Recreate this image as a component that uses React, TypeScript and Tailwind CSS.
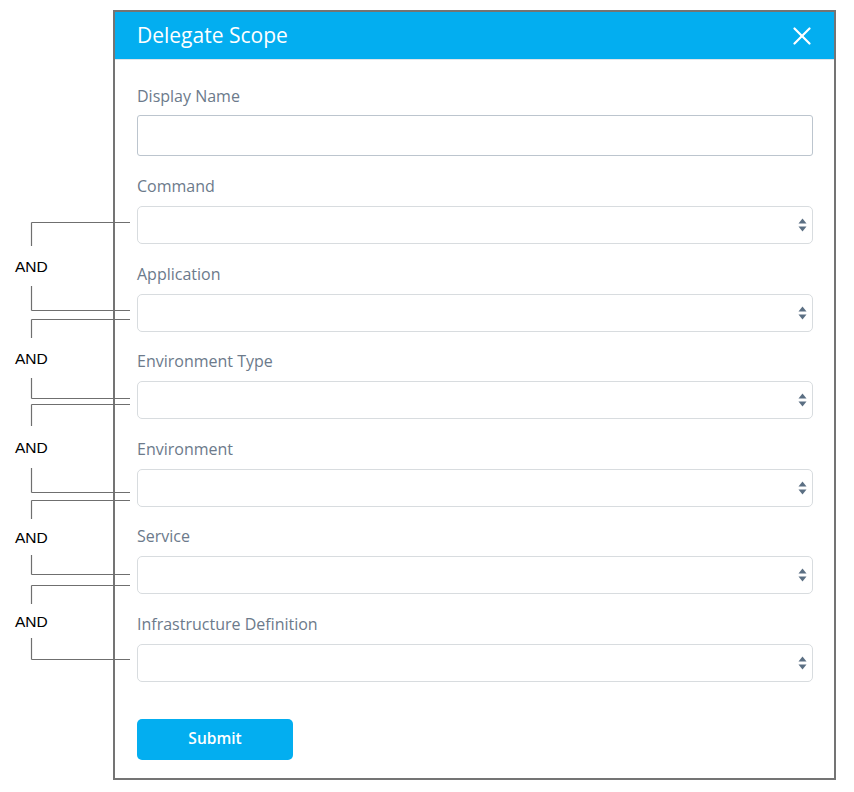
import React from "react";

const FIELDS = ["Command", "Application", "Environment Type", "Environment", "Service", "Infrastructure Definition"];

// left-hand "AND" brackets: top/bottom of the bracket, text centre, gap around the text
const BRACKETS = [
  { top: 222, bottom: 310, mid: 266, gap: 20 },
  { top: 319, bottom: 398, mid: 358, gap: 20 },
  { top: 404, bottom: 492, mid: 447, gap: 21 },
  { top: 500, bottom: 574, mid: 537, gap: 18 },
  { top: 585, bottom: 659, mid: 621, gap: 17 },
];

function SelectArrows() {
  return (
    <svg width="9" height="14" viewBox="0 0 9 14" className="text-[#5b6f83]">
      <polygon points="0.5,5.5 4.5,0.5 8.5,5.5" fill="currentColor" />
      <polygon points="0.5,8.5 8.5,8.5 4.5,13.5" fill="currentColor" />
    </svg>
  );
}

function Brackets() {
  return (
    <svg width="854" height="792" className="absolute left-0 top-0 pointer-events-none">
      {BRACKETS.map((b, i) => (
        <g key={i} stroke="#6f6f6f" strokeWidth="1.2" fill="none">
          <line x1="31.5" y1={b.top + 0.5} x2="130" y2={b.top + 0.5} />
          <line x1="31.5" y1={b.top + 0.5} x2="31.5" y2={b.mid - b.gap} />
          <line x1="31.5" y1={b.mid + b.gap} x2="31.5" y2={b.bottom + 0.5} />
          <line x1="31.5" y1={b.bottom + 0.5} x2="130" y2={b.bottom + 0.5} />
          <text
            x="15"
            y={b.mid}
            dominantBaseline="central"
            stroke="none"
            fill="#000"
            fontSize="15.5"
            fontFamily="'Liberation Sans', Arial, sans-serif"
          >
            AND
          </text>
        </g>
      ))}
    </svg>
  );
}

export default function App() {
  return (
    <div className="relative w-[854px] h-[792px] bg-white font-['Open_Sans',sans-serif]">
      <div className="pt-[10px] pl-[113px]">
        <div className="w-[723px] h-[770px] border-2 border-[#747474] flex flex-col">
          {/* Header */}
          <div className="h-[48px] shrink-0 bg-[#03aef0] border-b border-[#dfe4e8] flex items-center justify-between pl-[22px] pr-[23px]">
            <h1 className="text-[21px] text-white leading-none">Delegate Scope</h1>
            <svg width="18" height="18" viewBox="0 0 18 18" stroke="white" strokeWidth="2.2" strokeLinecap="round">
              <line x1="1.5" y1="1.5" x2="16.5" y2="16.5" />
              <line x1="16.5" y1="1.5" x2="1.5" y2="16.5" />
            </svg>
          </div>

          {/* Body */}
          <div className="pl-[22px] pr-[21px] pt-[26px] flex flex-col">
            <label className="h-5 leading-5 text-[16px] text-[#6c7a8b]">Display Name</label>
            <div className="mt-[9px] h-[41px] border border-[#bcc5ce] rounded-[3px]" />

            {FIELDS.map((f, i) => (
              <div key={f} className={i === 0 ? "mt-[20px]" : "mt-[19.5px]"}>
                <label className="block h-5 leading-5 text-[16px] text-[#6c7a8b]">{f}</label>
                <div className="mt-[10px] h-[38px] border border-[#d8dcdf] rounded-[5px] flex items-center justify-end pr-[5px]">
                  <SelectArrows />
                </div>
              </div>
            ))}

            <button className="mt-[37px] h-[41px] w-[156px] rounded-[5px] bg-[#03aef0] text-white text-[15.5px] font-semibold">
              Submit
            </button>
          </div>
        </div>
      </div>
      <Brackets />
    </div>
  );
}
